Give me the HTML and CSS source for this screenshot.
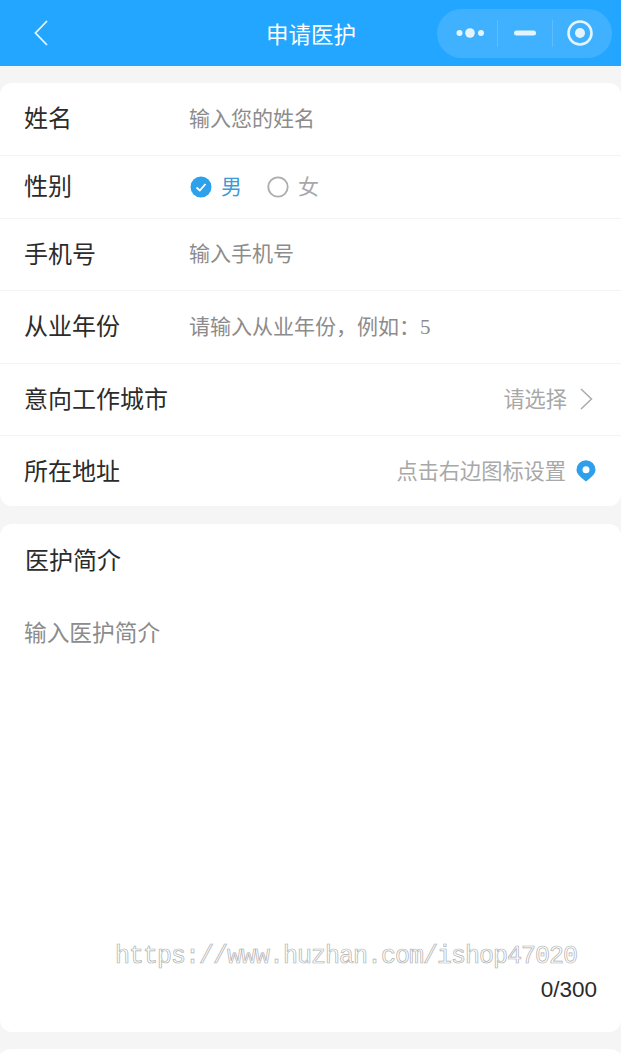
FILE: index.html
```html
<!DOCTYPE html>
<html>
<head>
  <meta charset="UTF-8">
  <title>申请医护</title>
  <link rel="stylesheet" href="styles.css">
</head>
<body>
  <!-- Title bar -->
  <div class="nav-bar">
    <svg class="nav-back" width="16" height="28" viewBox="0 0 16 28"><path d="M14 2 L2.500 14 L14 26" fill="none" stroke="#e8f6ff" stroke-width="1.800"/></svg>
    <span class="nav-title">申请医护</span>
    <div class="capsule">
      <svg width="30" height="12" viewBox="0 0 30 12"><circle cx="3.500" cy="6" r="3" fill="#e4f4ff"/><circle cx="14" cy="6" r="4.800" fill="#e4f4ff"/><circle cx="25" cy="6" r="3" fill="#e4f4ff"/></svg>
      <i class="capsule-line"></i>
      <svg class="capsule-dash" width="22" height="6" viewBox="0 0 22 6"><rect y="0.500" width="22" height="5" rx="2.500" fill="#e4f4ff"/></svg>
      <i class="capsule-line"></i>
      <svg class="capsule-target" width="26" height="26" viewBox="0 0 26 26"><circle cx="13" cy="13" r="11.500" fill="none" stroke="#e4f4ff" stroke-width="2.600"/><circle cx="13" cy="13" r="5" fill="#e4f4ff"/></svg>
    </div>
  </div>

  <!-- Basic info -->
  <div class="card">
    <div class="row row-tall">
      <span class="label">姓名</span>
      <span class="hint">输入您的姓名</span>
    </div>
    <div class="row row-short">
      <span class="label">性别</span>
      <div class="radios">
        <svg width="22" height="22" viewBox="0 0 22 22"><circle cx="11" cy="11" r="10.500" fill="#2ea1ec"/><path d="M6.500 11.500 L9.800 14.500 L15.500 8" fill="none" stroke="#fff" stroke-width="1.800"/></svg>
        <span class="radio-text on">男</span>
        <svg class="radio-off" width="22" height="22" viewBox="0 0 22 22"><circle cx="11" cy="11" r="9.700" fill="none" stroke="#adadad" stroke-width="1.800"/></svg>
        <span class="radio-text">女</span>
      </div>
    </div>
    <div class="row row-tall">
      <span class="label">手机号</span>
      <span class="hint">输入手机号</span>
    </div>
    <div class="row row-tall">
      <span class="label">从业年份</span>
      <span class="hint">请输入从业年份，例如：<span class="serif">5</span></span>
    </div>
    <div class="row row-tall">
      <span class="label">意向工作城市</span>
      <div class="row-right row-arrow">
        <span class="pick">请选择</span>
        <svg width="14" height="22" viewBox="0 0 14 22"><path d="M2 1 L12.500 11 L2 21" fill="none" stroke="#aaa" stroke-width="1.500"/></svg>
      </div>
    </div>
    <div class="row row-last">
      <span class="label">所在地址</span>
      <div class="row-right">
        <span class="pick">点击右边图标设置</span>
        <svg width="20" height="22" viewBox="0 0 20 22"><path fill-rule="evenodd" d="M10 21.500 C7 19 0.500 15 0.500 9.800 A9.500 9.500 0 0 1 19.500 9.800 C19.500 15 13 19 10 21.500 Z M10 6.300 A3.500 3.500 0 1 0 10 13.300 A3.500 3.500 0 1 0 10 6.300 Z" fill="#2e9fea"/></svg>
      </div>
    </div>
  </div>

  <!-- Intro -->
  <div class="card intro">
    <div class="intro-title">医护简介</div>
    <div class="intro-hint">输入医护简介</div>
    <div class="counter">0/300</div>
  </div>

  <div class="card card-next"></div>

  <!-- Watermark over the page -->
  <div class="watermark">https://www.huzhan.com/ishop47020</div>
</body>
</html>
```

FILE: styles.css
```css
:root {
  --blue: #22a6ff;
  --page: #f5f5f5;
  --line: #f3f3f3;
  --text: #2b2b2b;
  --hint: #8c8c8c;
  --pick: #a8a8a8;
}

html,
body {
  height: 100%;
}

body {
  position: relative;
  margin: 0;
  overflow: hidden;
  font-family: "Noto Sans CJK SC", "Noto Sans", sans-serif;
  color: var(--text);
  background-color: var(--page);
}

/* Title bar */
.nav-bar {
  position: relative;
  display: flex;
  align-items: center;
  justify-content: space-between;
  height: 66px;
  padding: 0 9px 0 33px;
  box-sizing: border-box;
  background-color: var(--blue);
}

.nav-back {
  flex: none;
}

.nav-title {
  position: absolute;
  left: 266px;
  top: 16px;
  font-size: 22.500px;
  line-height: 34px;
  color: #fff;
}

.capsule {
  display: flex;
  align-items: center;
  width: 175px;
  height: 49px;
  padding-left: 19px;
  box-sizing: border-box;
  border-radius: 25px;
  background-color: #3fb1ff;
}

.capsule-line {
  width: 1px;
  height: 27px;
  margin-left: 11px;
  background-color: #5dbdff;
}

.capsule-dash {
  margin-left: 16px;
}

.capsule-dash + .capsule-line {
  margin-left: 16px;
}

.capsule-target {
  margin-left: 14px;
}

/* Cards */
.card {
  margin-top: 18px;
  border-radius: 12px;
  background-color: #fff;
}

.nav-bar + .card {
  margin-top: 17px;
}

.row {
  display: flex;
  align-items: center;
  padding: 0 25px 0 24px;
  border-bottom: 1px solid var(--line);
}

.row-tall {
  height: 71.500px;
}

.row-short {
  height: 62px;
}

.row-last {
  height: 70px;
  border-bottom: none;
}

/* CJK glyphs sit low in the line box, lift them a little */
.label,
.hint,
.pick,
.radio-text {
  padding-bottom: 4px;
}

.label {
  flex: none;
  width: 165px;
  font-size: 24px;
  white-space: nowrap;
}

.hint {
  font-size: 21px;
  color: var(--hint);
}

.serif {
  font-family: "Liberation Serif", serif;
}

.radios {
  display: flex;
  align-items: center;
  margin-left: 1px;
}

.radio-text {
  margin-left: 9px;
  font-size: 21px;
  color: var(--pick);
}

.radio-text.on {
  color: #3f9bd6;
}

.radio-off {
  margin-left: 25px;
}

.row-right {
  display: flex;
  align-items: center;
  gap: 10px;
  margin-left: auto;
}

.row-arrow {
  gap: 12px;
  margin-right: 3px;
}

.pick {
  font-size: 21.200px;
  color: var(--pick);
}

/* Intro */
.intro {
  position: relative;
  height: 508px;
  padding: 0 24px;
}

.intro-title {
  padding-top: 17px;
  padding-left: 1px;
  font-size: 24px;
  line-height: 36px;
}

.intro-hint {
  margin-top: 37px;
  font-size: 22.700px;
  line-height: 36px;
  color: var(--hint);
}

.counter {
  position: absolute;
  right: 24px;
  bottom: 29px;
  font-family: "Liberation Sans", sans-serif;
  font-size: 22.500px;
  line-height: 26px;
}

.card-next {
  height: 20px;
  margin-top: 17px;
}

.watermark {
  position: absolute;
  left: 115px;
  top: 941px;
  font-family: "Liberation Mono", monospace;
  font-size: 25px;
  line-height: 32px;
  letter-spacing: -1px;
  white-space: nowrap;
  color: #fff;
  -webkit-text-stroke: 0.700px #b0b0b0;
}
```
